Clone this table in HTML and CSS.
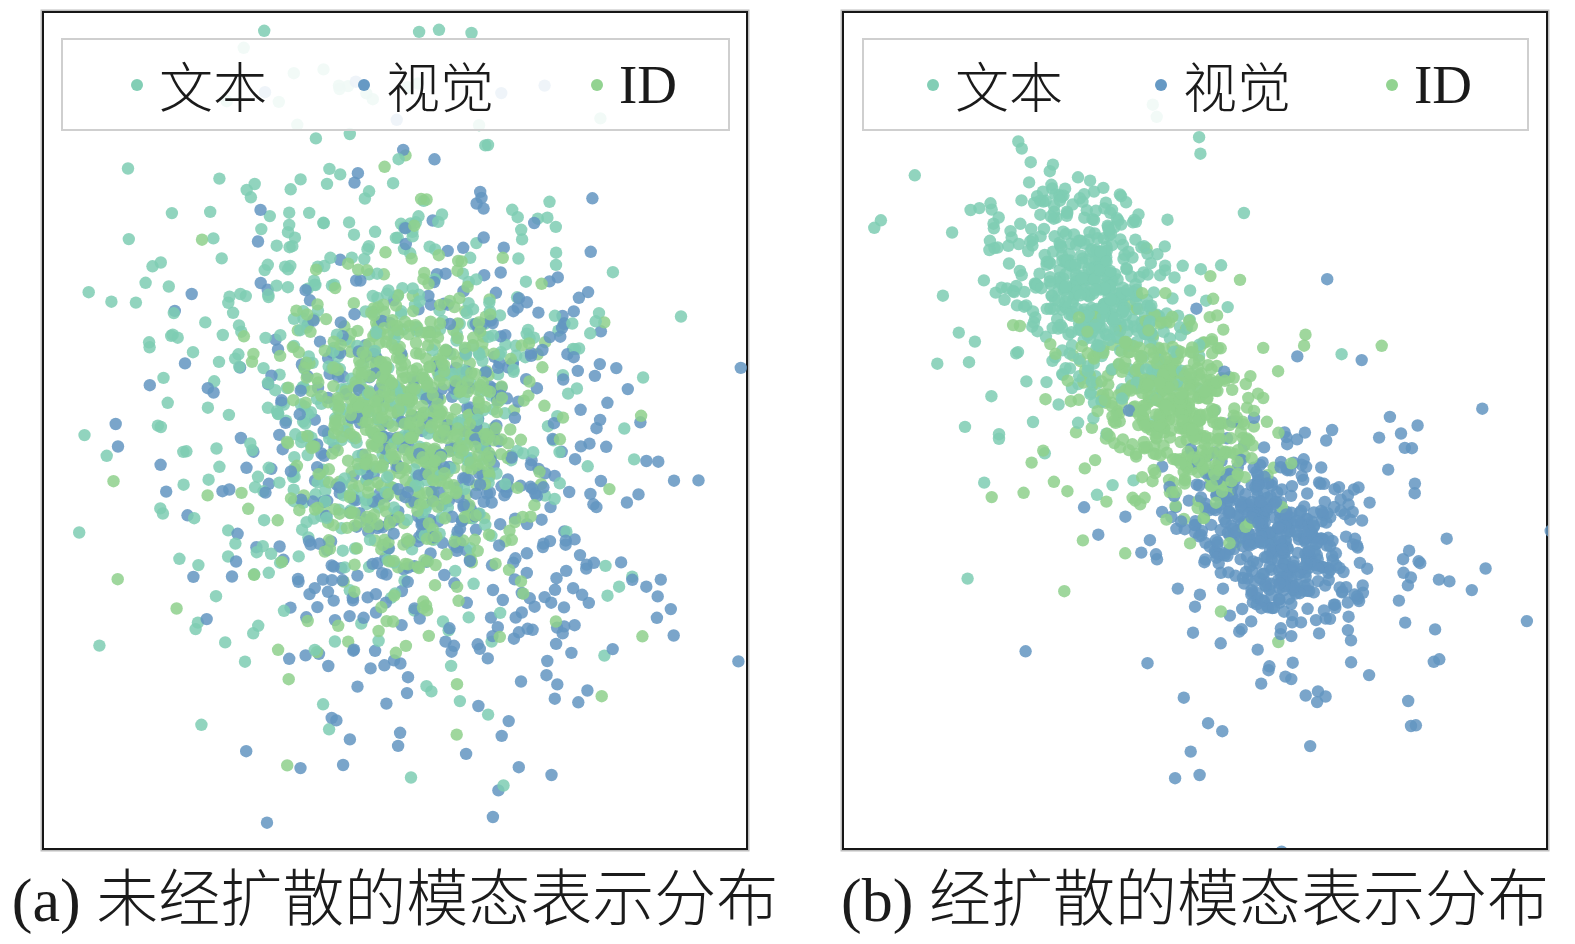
FILE: index.html
```html
<!DOCTYPE html>
<html lang="zh-CN">
<head>
<meta charset="utf-8">
<title>模态表示分布</title>
<link rel="stylesheet" href="styles.css">
</head>
<body>
<div class="page">
  <figure class="fig fig-a">
    <div class="frame">
      <svg class="plot" id="plot-a" width="704" height="835" viewBox="44 13 704 835" xmlns="http://www.w3.org/2000/svg"></svg>
      <div class="legend legend-a">
        <div class="item"><span class="dot teal"></span><span class="label cjk">文本</span></div>
        <div class="item"><span class="dot blue"></span><span class="label cjk">视觉</span></div>
        <div class="item"><span class="dot green"></span><span class="label latin">ID</span></div>
      </div>
    </div>
    <div class="caption"><span>(a) 未经扩散的模态表示分布</span></div>
  </figure>
  <figure class="fig fig-b">
    <div class="frame">
      <svg class="plot" id="plot-b" width="704" height="835" viewBox="844 13 704 835" xmlns="http://www.w3.org/2000/svg"></svg>
      <div class="legend legend-b">
        <div class="item"><span class="dot teal"></span><span class="label cjk">文本</span></div>
        <div class="item"><span class="dot blue"></span><span class="label cjk">视觉</span></div>
        <div class="item"><span class="dot green"></span><span class="label latin">ID</span></div>
      </div>
    </div>
    <div class="caption"><span>(b) 经扩散的模态表示分布</span></div>
  </figure>
</div>
<script src="script.js"></script>
</body>
</html>
```

FILE: styles.css
```css
html, body {
  margin: 0;
  padding: 0;
  background: #ffffff;
}

.page {
  display: flex;
  gap: 94px;
  padding: 11px 0 0 42px;
  font-family: "Liberation Serif", "Noto Sans CJK SC", serif;
  color: #1b1b1b;
}

.fig {
  margin: 0;
  width: 706px;
  display: flex;
  flex-direction: column;
}

.frame {
  position: relative;
  width: 706px;
  height: 839px;
  box-sizing: border-box;
  border: 2px solid #161616;
  box-shadow: 0 0 0 1.5px #bdbdbd;
  background: #ffffff;
}

.plot {
  display: block;
}

.legend {
  position: absolute;
  top: 25px;
  height: 93px;
  box-sizing: border-box;
  border: 2px solid #cfcfcf;
  background: rgba(255, 255, 255, 0.88);
  display: grid;
  align-items: center;
}

.legend-a {
  left: 17px;
  width: 669px;
  padding-left: 68px;
  grid-template-columns: 227px 233px auto;
}

.legend-b {
  left: 18px;
  width: 667px;
  padding-left: 63px;
  grid-template-columns: 228px 231px auto;
}

.item {
  display: flex;
  align-items: center;
}

.dot {
  width: 12px;
  height: 12px;
  border-radius: 50%;
  margin-right: 16px;
  flex: none;
}

.dot.teal { background: #82ceb5; }
.dot.blue { background: #6699c4; }
.dot.green { background: #92d391; }

.label {
  font-size: 54px;
  line-height: 60px;
  color: #1a1a1a;
}

.label.cjk {
  font-family: "Noto Sans CJK SC", sans-serif;
  font-weight: 300;
}

.label.latin {
  font-family: "Liberation Serif", serif;
  font-size: 55px;
}

.caption {
  display: flex;
  justify-content: center;
  margin-top: 10px;
  white-space: nowrap;
  font-size: 62px;
  line-height: 80px;
  font-family: "Liberation Serif", "Noto Sans CJK SC", serif;
  font-weight: 300;
  color: #1b1b1b;
}
```

FILE: script.js
```js
(function () {
  var NS = "http://www.w3.org/2000/svg";
  var COLORS = {
    teal: "#7ecdb3",
    blue: "#6395c1",
    green: "#8ed08c"
  };

  function mulberry32(a) {
    return function () {
      a |= 0; a = (a + 0x6D2B79F5) | 0;
      var t = Math.imul(a ^ (a >>> 15), 1 | a);
      t = (t + Math.imul(t ^ (t >>> 7), 61 | t)) ^ t;
      return ((t ^ (t >>> 14)) >>> 0) / 4294967296;
    };
  }

  function makeGauss(rand) {
    return function () {
      var u = 0, v = 0;
      while (u === 0) u = rand();
      while (v === 0) v = rand();
      return Math.sqrt(-2 * Math.log(u)) * Math.cos(2 * Math.PI * v);
    };
  }

  function cloud(gauss, n, cx, cy, sx, sy, rho, cls) {
    var pts = [];
    var k = Math.sqrt(1 - rho * rho);
    for (var i = 0; i < n; i++) {
      var z1 = gauss(), z2 = gauss();
      pts.push({ x: cx + sx * z1, y: cy + sy * (rho * z1 + k * z2), c: cls });
    }
    return pts;
  }

  function render(svgId, pts, rand, lift) {
    pts.forEach(function (p) {
      p.k = rand() + (lift[p.c] || 0);
    });
    pts.sort(function (a, b) { return a.k - b.k; });
    var svg = document.getElementById(svgId);
    var frag = document.createDocumentFragment();
    pts.forEach(function (p) {
      var c = document.createElementNS(NS, "circle");
      c.setAttribute("cx", p.x.toFixed(1));
      c.setAttribute("cy", p.y.toFixed(1));
      c.setAttribute("r", "6.2");
      c.setAttribute("fill", COLORS[p.c]);
      c.setAttribute("fill-opacity", "0.85");
      frag.appendChild(c);
    });
    svg.appendChild(frag);
  }

  // Panel (a): modalities overlap around the same centre
  var ra = mulberry32(20240611);
  var ga = makeGauss(ra);
  var a = [];
  a = a.concat(cloud(ga, 540, 365, 385, 108, 132, 0.0, "teal"));
  a = a.concat(cloud(ga, 540, 440, 470, 104, 124, 0.0, "blue"));
  a = a.concat(cloud(ga, 600, 410, 420, 56, 76, 0.0, "green"));
  a = a.concat(cloud(ga, 70, 400, 450, 105, 130, 0.0, "green"));
  render("plot-a", a, ra, { green: 0.35 });

  // Panel (b): modalities separated along a diagonal
  var rb = mulberry32(77123);
  var gb = makeGauss(rb);
  var b = [];
  b = b.concat(cloud(gb, 420, 1090, 292, 44, 50, 0.3, "teal"));
  b = b.concat(cloud(gb, 90, 1075, 285, 100, 90, 0.0, "teal"));
  b = b.concat(cloud(gb, 420, 1182, 410, 38, 45, 0.35, "green"));
  b = b.concat(cloud(gb, 80, 1170, 420, 95, 80, 0.1, "green"));
  b = b.concat(cloud(gb, 450, 1275, 535, 44, 46, 0.3, "blue"));
  b = b.concat(cloud(gb, 100, 1290, 565, 95, 105, 0.0, "blue"));
  render("plot-b", b, rb, { green: 0.2 });
})();
```
